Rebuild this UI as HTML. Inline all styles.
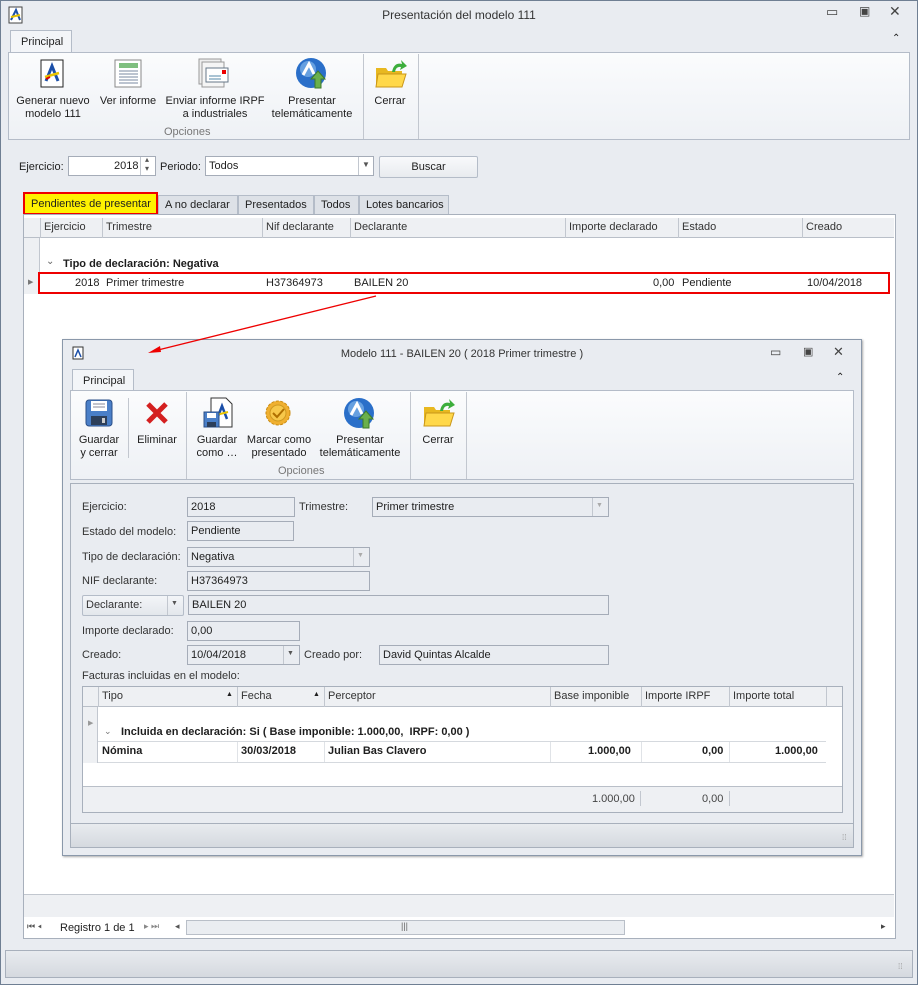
<!DOCTYPE html>
<html><head><meta charset="utf-8"><style>
*{box-sizing:border-box;margin:0;padding:0}
body{width:918px;height:985px;position:relative;overflow:hidden;background:#e9ecf1;font-family:"Liberation Sans",sans-serif;font-size:11px;color:#1e1e1e}
.a{position:absolute}
.t{position:absolute;white-space:nowrap}
.box{position:absolute;border:1px solid #a5acb8;background:#fff}
.ro{position:absolute;border:1px solid #a5acb8;background:#e9ecf1;padding:3px 0 0 3px;white-space:nowrap}
.hd{position:absolute;background:#eef0f3;border-bottom:1px solid #b9bfc8}
.vl{position:absolute;width:1px;background:#c2c7cf}
.lbl{position:absolute;white-space:nowrap;color:#333}
.c{text-align:center}
</style></head><body>
<!-- outer window -->
<div class="a" style="left:0;top:0;width:918px;height:985px;border:1px solid #6f7f93"></div>
<svg class="a" style="left:8px;top:6px" width="16" height="18"><rect x="1" y="1" width="13" height="16" fill="#fff" stroke="#444"/><path d="M3 14 L8 4 L12 14" stroke="#1b4fa8" stroke-width="2" fill="none"/><path d="M3 11 L12 9" stroke="#e8c400" stroke-width="2"/></svg>
<div class="t" style="left:0;width:918px;top:8px;text-align:center;font-size:12px;color:#333">Presentación del modelo 111</div>
<div class="t" style="left:826px;top:4px;font-size:13px;color:#444">▭</div>
<div class="t" style="left:859px;top:4px;font-size:12px;color:#444">▣</div>
<div class="t" style="left:889px;top:3px;font-size:14px;color:#444">✕</div>
<div class="a" style="left:10px;top:30px;width:62px;height:23px;background:#f3f5f8;border:1px solid #b4bcc8;border-bottom:none"></div>
<div class="t" style="left:21px;top:36px">Principal</div>
<div class="t" style="left:892px;top:33px;font-size:10px">⌃</div>
<div class="a" style="left:8px;top:52px;width:902px;height:88px;background:linear-gradient(#fbfcfd,#eef1f5);border:1px solid #b4bcc8"></div>
<div class="vl" style="left:363px;top:54px;height:85px"></div><div class="vl" style="left:418px;top:54px;height:85px"></div>
<svg class="a" style="left:40px;top:59px" width="26" height="30"><rect x="1" y="1" width="22" height="27" fill="#fff" stroke="#222"/><path d="M6 22 L12 7 L18 22" stroke="#1b4fa8" stroke-width="3" fill="none"/><path d="M5 18 L19 14" stroke="#e8c400" stroke-width="2.5"/><path d="M6 20 L10 18" stroke="#d00" stroke-width="2"/></svg>
<svg class="a" style="left:113px;top:59px" width="30" height="30"><rect x="2" y="1" width="26" height="27" fill="#fff" stroke="#888"/><rect x="6" y="4" width="19" height="5" fill="#7fbf7f"/><g stroke="#7a8aa0"><path d="M6 12H25M6 15H25M6 18H25M6 21H25M6 24H25"/></g></svg>
<svg class="a" style="left:198px;top:58px" width="32" height="32"><rect x="1" y="1" width="22" height="25" fill="#eee" stroke="#999"/><rect x="4" y="4" width="22" height="25" fill="#f5f5f5" stroke="#999"/><rect x="8" y="10" width="22" height="14" fill="#fff" stroke="#678"/><rect x="24" y="12" width="4" height="4" fill="#e00"/><path d="M11 18h12M11 21h12" stroke="#58a"/></svg>
<svg class="a" style="left:295px;top:57px" width="34" height="34"><circle cx="16" cy="16" r="15" fill="#2a6fc9"/><circle cx="13" cy="12" r="8" fill="#8fc2f0" opacity=".6"/><path d="M8 18 L14 7 L19 17" stroke="#fff" stroke-width="3" fill="none"/><path d="M23 14 L30 22 H26 V31 H20 V22 H16 Z" fill="#6ab04c" stroke="#3d7a2a"/></svg>
<svg class="a" style="left:374px;top:58px" width="34" height="32"><path d="M2 10 H12 L14 13 H28 V29 H2 Z" fill="#e8b820"/><path d="M4 16 H32 L28 29 H2 Z" fill="#ffd84a" stroke="#c9961a"/><path d="M18 14 Q20 4 28 6 L27 2 L33 8 L26 12 L27 9 Q22 8 21 14 Z" fill="#3cae3c"/></svg>
<div class="t c" style="left:12px;width:82px;top:95px;line-height:13px">Generar nuevo<br>modelo 111</div>
<div class="t c" style="left:98px;width:60px;top:95px">Ver informe</div>
<div class="t c" style="left:160px;width:110px;top:95px;line-height:13px">Enviar informe IRPF<br>a industriales</div>
<div class="t c" style="left:268px;width:88px;top:95px;line-height:13px">Presentar<br>telemáticamente</div>
<div class="t c" style="left:365px;width:50px;top:95px">Cerrar</div>
<div class="t" style="left:164px;top:126px;color:#777">Opciones</div>
<!-- filter -->
<div class="t" style="left:19px;top:161px">Ejercicio:</div>
<div class="box" style="left:68px;top:156px;width:88px;height:20px"></div>
<div class="t" style="left:114px;top:160px">2018</div>
<div class="vl" style="left:140px;top:157px;height:18px"></div>
<div class="t" style="left:145px;top:155px;font-size:8px;color:#555;line-height:9px">▴<br>▾</div>
<div class="t" style="left:160px;top:161px">Periodo:</div>
<div class="box" style="left:205px;top:156px;width:169px;height:20px"></div>
<div class="t" style="left:209px;top:160px">Todos</div>
<div class="vl" style="left:358px;top:157px;height:18px"></div>
<div class="t" style="left:362px;top:160px;font-size:8px;color:#555">▼</div>
<div class="a" style="left:379px;top:156px;width:99px;height:22px;border:1px solid #b4bcc8;border-radius:2px;background:linear-gradient(#f8f9fb,#e8ebef)"></div>
<div class="t c" style="left:379px;width:99px;top:161px">Buscar</div>
<!-- tabs -->
<div class="a" style="left:23px;top:192px;width:135px;height:23px;background:#fff200;border:2px solid #e00"></div>
<div class="t" style="left:31px;top:198px">Pendientes de presentar</div>
<div class="a" style="left:158px;top:195px;width:80px;height:20px;background:#dde1e7;border:1px solid #b4bcc8"></div><div class="t" style="left:165px;top:199px">A no declarar</div>
<div class="a" style="left:238px;top:195px;width:76px;height:20px;background:#dde1e7;border:1px solid #b4bcc8"></div><div class="t" style="left:245px;top:199px">Presentados</div>
<div class="a" style="left:314px;top:195px;width:45px;height:20px;background:#dde1e7;border:1px solid #b4bcc8"></div><div class="t" style="left:321px;top:199px">Todos</div>
<div class="a" style="left:359px;top:195px;width:90px;height:20px;background:#dde1e7;border:1px solid #b4bcc8"></div><div class="t" style="left:366px;top:199px">Lotes bancarios</div>
<!-- main grid -->
<div class="a" style="left:23px;top:214px;width:873px;height:725px;background:#fff;border:1px solid #a8b0bc"></div>
<div class="hd" style="left:24px;top:218px;width:870px;height:20px"></div>
<div class="a" style="left:24px;top:238px;width:16px;height:56px;background:#eef0f3;border-right:1px solid #c2c7cf"></div>
<div class="vl" style="left:40px;top:218px;height:20px"></div><div class="vl" style="left:102px;top:218px;height:20px"></div><div class="vl" style="left:262px;top:218px;height:20px"></div><div class="vl" style="left:350px;top:218px;height:20px"></div><div class="vl" style="left:565px;top:218px;height:20px"></div><div class="vl" style="left:678px;top:218px;height:20px"></div><div class="vl" style="left:802px;top:218px;height:20px"></div>
<div class="t" style="left:44px;top:221px;color:#333">Ejercicio</div><div class="t" style="left:106px;top:221px;color:#333">Trimestre</div><div class="t" style="left:266px;top:221px;color:#333">Nif declarante</div><div class="t" style="left:354px;top:221px;color:#333">Declarante</div><div class="t" style="left:569px;top:221px;color:#333">Importe declarado</div><div class="t" style="left:682px;top:221px;color:#333">Estado</div><div class="t" style="left:806px;top:221px;color:#333">Creado</div>
<div class="t" style="left:46px;top:256px;font-size:10px;color:#666">⌄</div>
<div class="t" style="left:63px;top:258px;font-weight:bold">Tipo de declaración: Negativa</div>
<div class="a" style="left:38px;top:272px;width:852px;height:22px;border:2px solid #e00"></div>
<div class="t" style="left:28px;top:278px;font-size:7px;color:#777">▶</div>
<div class="t" style="left:75px;top:277px">2018</div><div class="t" style="left:106px;top:277px">Primer trimestre</div><div class="t" style="left:266px;top:277px">H37364973</div><div class="t" style="left:354px;top:277px">BAILEN 20</div><div class="t" style="left:653px;top:277px">0,00</div><div class="t" style="left:682px;top:277px">Pendiente</div><div class="t" style="left:807px;top:277px">10/04/2018</div>
<!-- grid bottom -->
<div class="a" style="left:24px;top:894px;width:870px;height:23px;background:#eef0f3;border-top:1px solid #c2c7cf"></div>
<div class="a" style="left:24px;top:917px;width:870px;height:21px;background:#fff"></div>
<div class="t" style="left:27px;top:921px;font-size:9px;color:#555">⏮ ◂</div>
<div class="t" style="left:60px;top:922px">Registro 1 de 1</div>
<div class="t" style="left:144px;top:921px;font-size:9px;color:#888">▸ ⏭</div>
<div class="t" style="left:175px;top:921px;font-size:9px;color:#555">◂</div>
<div class="a" style="left:186px;top:920px;width:439px;height:15px;background:#eaedf1;border:1px solid #b9bfc8"></div>
<div class="t" style="left:401px;top:921px;font-size:9px;color:#666">|||</div>
<div class="t" style="left:881px;top:921px;font-size:9px;color:#444">▸</div>
<!-- status -->
<div class="a" style="left:5px;top:950px;width:908px;height:28px;background:linear-gradient(#e8ebef,#d5d9df);border:1px solid #a8b0bc"></div>
<div class="t" style="left:898px;top:962px;font-size:8px;color:#999">⁞⁞</div>

<!-- inner dialog -->
<div class="a" style="left:62px;top:339px;width:800px;height:517px;background:#e9ecf1;border:1px solid #8a98aa;box-shadow:1px 1px 2px #aaa"></div>
<svg class="a" style="left:72px;top:346px" width="12" height="14"><rect x="1" y="1" width="10" height="12" fill="#fff" stroke="#333"/><path d="M3 11 L6 4 L9 11" stroke="#1b4fa8" stroke-width="1.5" fill="none"/></svg>
<div class="t" style="left:62px;width:800px;top:348px;text-align:center;color:#333">Modelo 111 - BAILEN 20 ( 2018 Primer trimestre )</div>
<div class="t" style="left:770px;top:345px;font-size:12px;color:#444">▭</div>
<div class="t" style="left:803px;top:345px;font-size:11px;color:#444">▣</div>
<div class="t" style="left:833px;top:344px;font-size:13px;color:#444">✕</div>
<div class="a" style="left:72px;top:369px;width:62px;height:22px;background:#f3f5f8;border:1px solid #b4bcc8;border-bottom:none"></div>
<div class="t" style="left:83px;top:375px">Principal</div>
<div class="t" style="left:836px;top:372px;font-size:10px">⌃</div>
<div class="a" style="left:70px;top:390px;width:784px;height:90px;background:linear-gradient(#fbfcfd,#eef1f5);border:1px solid #b4bcc8"></div>
<div class="vl" style="left:128px;top:398px;height:60px"></div><div class="vl" style="left:186px;top:392px;height:87px"></div><div class="vl" style="left:410px;top:392px;height:87px"></div><div class="vl" style="left:466px;top:392px;height:87px"></div>
<svg class="a" style="left:85px;top:399px" width="28" height="28"><rect x="1" y="1" width="26" height="26" rx="3" fill="#4a7fc8" stroke="#2a4f88"/><rect x="6" y="2" width="16" height="10" fill="#fff"/><path d="M8 5h12M8 8h12" stroke="#889"/><rect x="6" y="17" width="16" height="9" fill="#2d3f5a"/><rect x="17" y="19" width="3" height="5" fill="#ccc"/></svg>
<svg class="a" style="left:145px;top:401px" width="24" height="24"><path d="M3 3 L21 21 M21 3 L3 21" stroke="#d42020" stroke-width="5"/></svg>
<svg class="a" style="left:203px;top:397px" width="30" height="32"><path d="M8 1 H23 L29 7 V30 H8 Z" fill="#fff" stroke="#333"/><path d="M14 22 L19 9 L24 22" stroke="#1b4fa8" stroke-width="2.5" fill="none"/><path d="M13 18 L25 15" stroke="#e8c400" stroke-width="2"/><rect x="1" y="15" width="15" height="15" fill="#4a7fc8" stroke="#2a4f88"/><rect x="4" y="16" width="9" height="5" fill="#fff"/><rect x="4" y="25" width="9" height="5" fill="#2d3f5a"/></svg>
<svg class="a" style="left:265px;top:400px" width="26" height="26"><circle cx="13" cy="13" r="12" fill="#f0b030" stroke="#c98a10" stroke-dasharray="3 1.5"/><circle cx="13" cy="13" r="8" fill="#f7c84a" stroke="#d09a20"/><path d="M8 13 L12 17 L19 9" stroke="#b07000" stroke-width="2" fill="none"/></svg>
<svg class="a" style="left:343px;top:397px" width="34" height="34"><circle cx="16" cy="16" r="15" fill="#2a6fc9"/><circle cx="13" cy="12" r="8" fill="#8fc2f0" opacity=".6"/><path d="M8 18 L14 7 L19 17" stroke="#fff" stroke-width="3" fill="none"/><path d="M23 14 L30 22 H26 V31 H20 V22 H16 Z" fill="#6ab04c" stroke="#3d7a2a"/></svg>
<svg class="a" style="left:422px;top:397px" width="34" height="32"><path d="M2 10 H12 L14 13 H28 V29 H2 Z" fill="#e8b820"/><path d="M4 16 H32 L28 29 H2 Z" fill="#ffd84a" stroke="#c9961a"/><path d="M18 14 Q20 4 28 6 L27 2 L33 8 L26 12 L27 9 Q22 8 21 14 Z" fill="#3cae3c"/></svg>
<div class="t c" style="left:74px;width:50px;top:434px;line-height:13px">Guardar<br>y cerrar</div>
<div class="t c" style="left:132px;width:50px;top:434px">Eliminar</div>
<div class="t c" style="left:190px;width:54px;top:434px;line-height:13px">Guardar<br>como …</div>
<div class="t c" style="left:244px;width:70px;top:434px;line-height:13px">Marcar como<br>presentado</div>
<div class="t c" style="left:316px;width:88px;top:434px;line-height:13px">Presentar<br>telemáticamente</div>
<div class="t c" style="left:412px;width:52px;top:434px">Cerrar</div>
<div class="t" style="left:278px;top:465px;color:#777">Opciones</div>
<!-- form panel -->
<div class="a" style="left:70px;top:483px;width:784px;height:365px;border:1px solid #a8b0bc;background:#e9ecf1"></div>
<div class="lbl" style="left:82px;top:501px">Ejercicio:</div><div class="ro" style="left:187px;top:497px;width:108px;height:20px">2018</div>
<div class="lbl" style="left:299px;top:501px">Trimestre:</div><div class="ro" style="left:372px;top:497px;width:237px;height:20px">Primer trimestre</div><div class="vl" style="left:592px;top:498px;height:18px"></div><div class="t" style="left:596px;top:502px;font-size:7px;color:#aaa">▼</div>
<div class="lbl" style="left:82px;top:526px">Estado del modelo:</div><div class="ro" style="left:187px;top:521px;width:107px;height:20px">Pendiente</div>
<div class="lbl" style="left:82px;top:551px">Tipo de declaración:</div><div class="ro" style="left:187px;top:547px;width:183px;height:20px">Negativa</div><div class="vl" style="left:353px;top:548px;height:18px"></div><div class="t" style="left:357px;top:552px;font-size:7px;color:#aaa">▼</div>
<div class="lbl" style="left:82px;top:575px">NIF declarante:</div><div class="ro" style="left:187px;top:571px;width:183px;height:20px">H37364973</div>
<div class="a" style="left:82px;top:595px;width:102px;height:21px;border:1px solid #b4bcc8;border-radius:2px;background:linear-gradient(#f3f5f8,#e3e7ec)"></div><div class="lbl" style="left:86px;top:599px">Declarante:</div><div class="vl" style="left:167px;top:596px;height:19px"></div><div class="t" style="left:171px;top:600px;font-size:7px;color:#555">▼</div>
<div class="ro" style="left:188px;top:595px;width:421px;height:20px">BAILEN 20</div>
<div class="lbl" style="left:82px;top:625px">Importe declarado:</div><div class="ro" style="left:187px;top:621px;width:113px;height:20px">0,00</div>
<div class="lbl" style="left:82px;top:649px">Creado:</div><div class="ro" style="left:187px;top:645px;width:113px;height:20px">10/04/2018</div><div class="vl" style="left:283px;top:646px;height:18px"></div><div class="t" style="left:287px;top:650px;font-size:7px;color:#555">▼</div>
<div class="lbl" style="left:304px;top:649px">Creado por:</div><div class="ro" style="left:379px;top:645px;width:230px;height:20px">David Quintas Alcalde</div>
<div class="lbl" style="left:82px;top:670px;font-size:11px">Facturas incluidas en el modelo:</div>
<!-- inner grid -->
<div class="a" style="left:82px;top:686px;width:761px;height:127px;background:#fff;border:1px solid #a8b0bc"></div>
<div class="hd" style="left:83px;top:687px;width:759px;height:20px"></div>
<div class="a" style="left:83px;top:707px;width:15px;height:56px;background:#eef0f3;border-right:1px solid #c2c7cf"></div>
<div class="vl" style="left:98px;top:687px;height:20px"></div><div class="vl" style="left:237px;top:687px;height:20px"></div><div class="vl" style="left:324px;top:687px;height:20px"></div><div class="vl" style="left:550px;top:687px;height:20px"></div><div class="vl" style="left:641px;top:687px;height:20px"></div><div class="vl" style="left:729px;top:687px;height:20px"></div><div class="vl" style="left:826px;top:687px;height:20px"></div>
<div class="t" style="left:102px;top:690px;font-size:11px;color:#333">Tipo</div><div class="t" style="left:226px;top:691px;font-size:7px">▲</div>
<div class="t" style="left:241px;top:690px;font-size:11px;color:#333">Fecha</div><div class="t" style="left:313px;top:691px;font-size:7px">▲</div>
<div class="t" style="left:328px;top:690px;font-size:11px;color:#333">Perceptor</div>
<div class="t" style="left:554px;top:690px;font-size:11px;color:#333">Base imponible</div>
<div class="t" style="left:645px;top:690px;font-size:11px;color:#333">Importe IRPF</div>
<div class="t" style="left:733px;top:690px;font-size:11px;color:#333">Importe total</div>
<div class="t" style="left:88px;top:719px;font-size:7px;color:#999">▶</div>
<div class="t" style="left:104px;top:726px;font-size:9px;color:#777">⌄</div>
<div class="t" style="left:121px;top:726px;font-weight:bold;font-size:11px">Incluida en declaración: Si ( Base imponible: 1.000,00,&nbsp; IRPF: 0,00 )</div>
<div class="a" style="left:98px;top:741px;width:728px;height:1px;background:#d5d9de"></div>
<div class="a" style="left:98px;top:762px;width:728px;height:1px;background:#d5d9de"></div>
<div class="vl" style="left:237px;top:742px;height:20px;background:#e0e3e7"></div><div class="vl" style="left:324px;top:742px;height:20px;background:#e0e3e7"></div><div class="vl" style="left:550px;top:742px;height:20px;background:#e0e3e7"></div><div class="vl" style="left:641px;top:742px;height:20px;background:#e0e3e7"></div><div class="vl" style="left:729px;top:742px;height:20px;background:#e0e3e7"></div>
<div class="t" style="left:102px;top:745px;font-weight:bold;font-size:11px">Nómina</div>
<div class="t" style="left:241px;top:745px;font-weight:bold;font-size:11px">30/03/2018</div>
<div class="t" style="left:328px;top:745px;font-weight:bold;font-size:11px">Julian Bas Clavero</div>
<div class="t" style="left:588px;top:745px;font-weight:bold;font-size:11px">1.000,00</div>
<div class="t" style="left:702px;top:745px;font-weight:bold;font-size:11px">0,00</div>
<div class="t" style="left:775px;top:745px;font-weight:bold;font-size:11px">1.000,00</div>
<div class="a" style="left:83px;top:786px;width:759px;height:26px;background:#eef0f3;border-top:1px solid #b9bfc8"></div>
<div class="t" style="left:592px;top:793px;font-size:11px;color:#444">1.000,00</div><div class="vl" style="left:640px;top:791px;height:15px"></div>
<div class="t" style="left:702px;top:793px;font-size:11px;color:#444">0,00</div><div class="vl" style="left:729px;top:791px;height:15px"></div>
<div class="a" style="left:70px;top:823px;width:784px;height:25px;background:linear-gradient(#e8ebef,#d5d9df);border:1px solid #a8b0bc"></div>
<div class="t" style="left:842px;top:833px;font-size:8px;color:#999">⁞⁞</div>
<!-- arrow on top -->
<svg class="a" style="left:140px;top:290px" width="250" height="70"><path d="M236 6 L14 61" stroke="#e00" stroke-width="1.3"/><path d="M8 63 L20 56 L21 62 Z" fill="#e00"/></svg>
</body></html>
